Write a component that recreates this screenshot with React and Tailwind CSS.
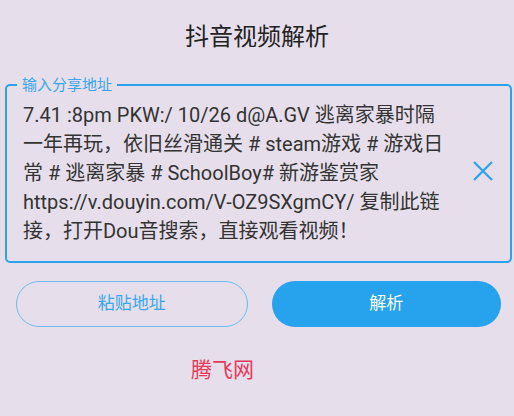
const lines = [
  '7.41 :8pm PKW:/ 10/26 d@A.GV 逃离家暴时隔',
  '一年再玩，依旧丝滑通关 # steam游戏 # 游戏日',
  '常 # 逃离家暴 # SchoolBoy# 新游鉴赏家',
  'https://v.douyin.com/V-OZ9SXgmCY/ 复制此链',
  '接，打开Dou音搜索，直接观看视频！',
]

export default function App() {
  return (
    <div
      className="min-h-screen w-full bg-[#e6dfeb] overflow-hidden"
      style={{ fontFamily: 'Roboto, "Noto Sans CJK SC", sans-serif' }}
    >
      <h1 className="pt-[21px] text-center text-[24px] leading-8 text-[#222]">抖音视频解析</h1>

      <fieldset className="mt-[22px] ml-[5px] mr-[2px] rounded-[5px] border-2 border-[#2aa3ec] pl-4 pr-4 pb-[15px]">
        <legend className="ml-[-6px] px-[5px] text-[15px] leading-5 text-[#3aa6ea]">输入分享地址</legend>
        <div className="flex items-center">
          <div className="flex-1 pt-[6px] text-[20px] leading-[29px] text-[#333] whitespace-nowrap">
            {lines.map((l, i) => (
              <div key={i}>{l}</div>
            ))}
          </div>
          <svg width="20" height="20" viewBox="0 0 20 20" className="mr-[1px] text-[#2aa3ec]">
            <path d="M1 1L19 19M19 1L1 19" stroke="currentColor" strokeWidth="2.2" fill="none" />
          </svg>
        </div>
      </fieldset>

      <div className="mt-[18px] flex gap-6 pl-4 pr-[13px]">
        <button className="h-[46px] flex-1 rounded-full border border-[#6fbbee] text-[17px] text-[#3aa6ea]">
          粘贴地址
        </button>
        <button className="h-[46px] flex-1 rounded-full bg-[#27a2ec] text-[17px] text-white">
          解析
        </button>
      </div>

      <div className="mt-[29px] pl-[191px] text-[21px] leading-7 text-[#e5395c]">腾飞网</div>
    </div>
  )
}
